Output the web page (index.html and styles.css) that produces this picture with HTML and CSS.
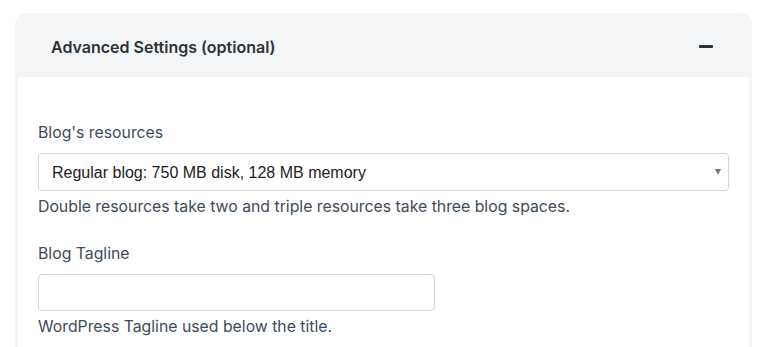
FILE: index.html
```html
<!DOCTYPE html>
<html lang="en">
<head>
    <meta charset="UTF-8">
    <meta name="viewport" content="width=device-width, initial-scale=1.0">
    <title>Advanced Settings</title>
    <link rel="stylesheet" href="styles.css">
</head>
<body>

<div class="card">
    <div class="card-header">
        <h3>Advanced Settings (optional)</h3>
        <span class="toggle" aria-label="Collapse"></span>
    </div>

    <div class="card-body">
        <!-- Recursos del blog -->
        <div class="field">
            <label for="resources">Blog's resources</label>
            <div class="select-wrap">
                <select id="resources">
                    <option>Regular blog: 750 MB disk, 128 MB memory</option>
                    <option>Double resources</option>
                    <option>Triple resources</option>
                </select>
            </div>
            <p class="help">Double resources take two and triple resources take three blog spaces.</p>
        </div>

        <!-- Tagline -->
        <div class="field">
            <label for="tagline">Blog Tagline</label>
            <input type="text" id="tagline" class="input-short">
            <p class="help">WordPress Tagline used below the title.</p>
        </div>
    </div>
</div>

</body>
</html>
```

FILE: styles.css
```css
body {
    font-family: Inter, "Liberation Sans", sans-serif;
    margin: 0;
    padding: 0;
    background-color: #fff;
    color: #3c4858;
}

.card {
    margin: 13px 16px 0 15px;
    border: 3px solid #f3f5f7;
    border-bottom: none;
    border-radius: 12px 12px 0 0;
    background-color: #fff;
}

.card-header {
    background-color: #f3f5f7;
    height: 61px;
    padding: 0 36px 0 33px;
    display: flex;
    justify-content: space-between;
    align-items: center;
    border-radius: 10px 10px 0 0;
}

.card-header h3 {
    margin: 0;
    font-size: 16px;
    font-weight: 600;
    color: #2c3338;
}

.toggle {
    width: 14px;
    height: 3px;
    border-radius: 1px;
    background-color: #2c3338;
}

.card-body {
    padding: 44px 20px 20px 20px;
}

.field {
    margin-bottom: 23px;
}

.field label {
    display: block;
    font-size: 15.8px;
    line-height: 24px;
    margin-bottom: 8px;
    color: #3e4b5b;
}

.select-wrap {
    position: relative;
}

.select-wrap::after {
    content: "";
    position: absolute;
    right: 8px;
    top: 16px;
    border-left: 3.5px solid transparent;
    border-right: 3.5px solid transparent;
    border-top: 6px solid #777;
    pointer-events: none;
}

select,
input {
    display: block;
    box-sizing: border-box;
    height: 38px;
    border: 1px solid #d4d4d4;
    border-radius: 4px;
    background-color: #fff;
    font-family: "Liberation Sans", Arial, sans-serif;
    font-size: 16px;
    color: #222;
    margin: 0;
}

select {
    width: 100%;
    padding: 0 24px 0 13px;
    appearance: none;
    -webkit-appearance: none;
}

.input-short {
    width: 397px;
    height: 37px;
    padding: 0 12px;
}

.help {
    margin: 4px 0 0 0;
    font-size: 15.8px;
    line-height: 24px;
    color: #3e4b5b;
}
```
